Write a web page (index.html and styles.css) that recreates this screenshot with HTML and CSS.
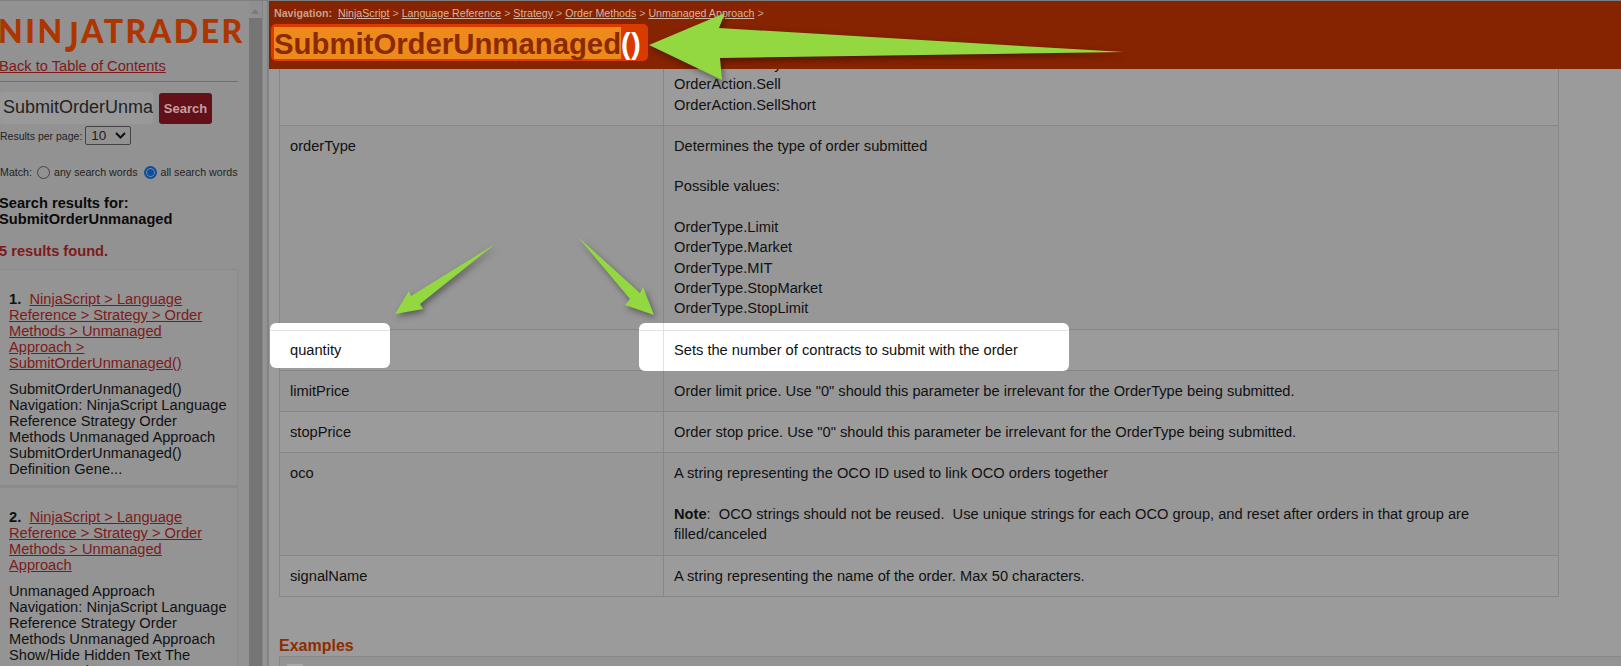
FILE: index.html
```html
<!DOCTYPE html>
<html lang="en">
<head>
    <meta charset="UTF-8">
    <meta name="viewport" content="width=device-width, initial-scale=1.0">
    <title>SubmitOrderUnmanaged()</title>
    <link rel="stylesheet" href="styles.css">
</head>
<body>
    <div class="sidebar">
        <div class="logo">NIN<span class="logo-j">J</span>ATRADER</div>
        <a class="back-link" href="#">Back to Table of Contents</a>
        <hr class="rule">
        <div class="search-row">
            <div class="search-input">SubmitOrderUnmanaged</div>
            <button class="search-btn">Search</button>
        </div>
        <div class="per-page">
            <span>Results per page:</span>
            <span class="select">10<svg width="11" height="7" viewBox="0 0 11 7"><path d="M1 1l4.500 4.500L10 1" fill="none" stroke="#111" stroke-width="2"/></svg></span>
        </div>
        <div class="match">
            <span>Match:</span>
            <span class="radio"></span>
            <span>any search words</span>
            <span class="radio radio-on"></span>
            <span>all search words</span>
        </div>
        <div class="results-title">Search results for:<br>SubmitOrderUnmanaged</div>
        <div class="results-count">5 results found.</div>
        <div class="result">
            <div class="result-link"><b>1.</b>&nbsp; <a href="#">NinjaScript &gt; Language Reference &gt; Strategy &gt; Order Methods &gt; Unmanaged<br>Approach &gt; SubmitOrderUnmanaged()</a></div>
            <div class="result-text">SubmitOrderUnmanaged() Navigation: NinjaScript Language Reference Strategy Order Methods Unmanaged Approach SubmitOrderUnmanaged() Definition Gene...</div>
        </div>
        <div class="result">
            <div class="result-link"><b>2.</b>&nbsp; <a href="#">NinjaScript &gt; Language Reference &gt; Strategy &gt; Order Methods &gt; Unmanaged<br>Approach</a></div>
            <div class="result-text">Unmanaged Approach Navigation: NinjaScript Language Reference Strategy Order Methods Unmanaged Approach Show/Hide Hidden Text The Unmanaged...</div>
        </div>
    </div>

    <div class="scrollbar">
        <div class="scroll-up"></div>
        <div class="scroll-thumb"></div>
    </div>
    <div class="splitter"></div>

    <div class="main">
        <div class="topic-header">
            <div class="crumbs">
                <b>Navigation:</b>&nbsp; <a href="#">NinjaScript</a> &gt; <a href="#">Language Reference</a> &gt; <a href="#">Strategy</a> &gt; <a href="#">Order Methods</a> &gt; <a href="#">Unmanaged Approach</a> &gt;
            </div>
            <h1 class="topic-title"><span class="title-mark"><span class="title-hit">SubmitOrderUnmanaged</span><span class="title-rest">()</span></span></h1>
        </div>
        <div class="content">
            <table class="params">
                <tr>
                    <td class="name"></td>
                    <td>OrderAction.Buy<br>OrderAction.Sell<br>OrderAction.SellShort</td>
                </tr>
                <tr>
                    <td class="name">orderType</td>
                    <td>Determines the type of order submitted<br><br>Possible values:<br><br>OrderType.Limit<br>OrderType.Market<br>OrderType.MIT<br>OrderType.StopMarket<br>OrderType.StopLimit</td>
                </tr>
                <tr>
                    <td class="name"><span class="spot spot-name"><i class="spot-line"></i></span><span class="over">quantity</span></td>
                    <td><span class="spot spot-desc"><i class="spot-line"></i><i class="spot-col"></i></span><span class="over">Sets the number of contracts to submit with the order</span></td>
                </tr>
                <tr>
                    <td class="name">limitPrice</td>
                    <td>Order limit price. Use "0" should this parameter be irrelevant for the OrderType being submitted.</td>
                </tr>
                <tr>
                    <td class="name">stopPrice</td>
                    <td>Order stop price. Use "0" should this parameter be irrelevant for the OrderType being submitted.</td>
                </tr>
                <tr>
                    <td class="name">oco</td>
                    <td>A string representing the OCO ID used to link OCO orders together<br><br><b>Note</b>:&nbsp; OCO strings should not be reused.&nbsp; Use unique strings for each OCO group, and reset after orders in that group are filled/canceled</td>
                </tr>
                <tr>
                    <td class="name">signalName</td>
                    <td>A string representing the name of the order. Max 50 characters.</td>
                </tr>
            </table>
            <h2 class="section-title">Examples</h2>
            <div class="example-box"><span class="example-icon"></span></div>
        </div>
    </div>

    <svg class="arrows" width="1621" height="666" viewBox="0 0 1621 666">
        <polygon points="649,45 725,13 719,28 1124,52 720,58 722,80"/>
        <polygon points="495,244 420,304 423,309 395,314 409,291 411,296"/>
        <polygon points="578,237 640,293 643,287 654,315 625,305 630,299"/>
    </svg>
</body>
</html>
```

FILE: styles.css
```css
* {
    box-sizing: border-box;
}

html, body {
    height: 100%;
}

body {
    display: flex;
    margin: 0;
    overflow: hidden;
    background: #9b9b9b;
    border-top: 1px solid #7f7f7f;
    font-family: "Liberation Sans", Arial, sans-serif;
    color: #111;
}

.sidebar {
    width: 249px;
    flex-shrink: 0;
    padding-right: 11px;
    overflow: hidden;
    background: #929292;
}

.logo {
    margin: 11px 0 0 -2px;
    height: 42px;
    font-family: Lato, sans-serif;
    font-size: 32px;
    font-weight: 900;
    line-height: 37px;
    letter-spacing: 2.500px;
    white-space: nowrap;
    color: #ad3600;
}

.logo-j {
    display: inline-block;
    transform: scaleY(1.3);
    transform-origin: top;
}

.back-link {
    display: block;
    margin: 3px 0 0 -1px;
    font-size: 14.670px;
    line-height: 18px;
    color: #7d1a1a;
}

.rule {
    margin: 6px 0 0;
    border: 0;
    border-top: 1px solid #6f6f6f;
}

.search-row {
    display: flex;
    align-items: flex-start;
    gap: 6px;
    margin-top: 10px;
}

.search-input {
    width: 153px;
    height: 32px;
    padding-left: 3px;
    overflow: hidden;
    background: #999;
    border-radius: 4px;
    font-size: 18px;
    line-height: 31px;
    white-space: nowrap;
    color: #222;
}

.search-btn {
    width: 53px;
    height: 31px;
    margin-top: 1px;
    padding: 0;
    background: #641018;
    border: 0;
    border-radius: 3px;
    font-family: inherit;
    font-size: 13px;
    font-weight: 700;
    color: #c2a0a0;
}

.per-page {
    display: flex;
    align-items: center;
    gap: 3px;
    margin-top: 2px;
    font-size: 10.500px;
    color: #222;
}

.select {
    display: flex;
    align-items: center;
    justify-content: space-between;
    width: 46px;
    height: 19px;
    padding: 0 4px 0 5px;
    border: 1px solid #444;
    border-radius: 2px;
    font-size: 13.500px;
}

.match {
    display: flex;
    align-items: center;
    gap: 3px;
    height: 16px;
    margin-top: 19px;
    font-size: 10.670px;
    white-space: nowrap;
    color: #222;
}

.radio {
    width: 13px;
    height: 13px;
    margin: 0 1px 0 2px;
    border: 1px solid #444;
    border-radius: 50%;
}

.radio-on {
    margin-left: 3px;
    border: 2px solid #0b4da0;
    background: #0b4da0;
    box-shadow: inset 0 0 0 1px #8f8f8f;
}

.results-title {
    margin-top: 15px;
    margin-left: -1px;
    font-size: 14.670px;
    font-weight: 700;
    line-height: 16px;
    color: #0a0a0a;
}

.results-count {
    margin: 16px 0 0 -1px;
    font-size: 14.670px;
    font-weight: 700;
    line-height: 16px;
    color: #7d1a1a;
}

.result {
    padding: 21px 9px 0;
    height: 218px;
    border: 1px solid #8b8b8b;
    border-bottom-width: 2px;
    border-left: 0;
    background: #949494;
    font-size: 14.670px;
    line-height: 16px;
}

.results-count + .result {
    margin-top: 10px;
}

.result-link a {
    color: #7d1a1a;
}

.result-text {
    margin-top: 10px;
    color: #111;
}

.scrollbar {
    width: 13px;
    flex-shrink: 0;
    background: #8f8f8f;
}

.scroll-up {
    height: 17px;
    padding: 8px 0 0 2px;
}

.scroll-up::before {
    content: "";
    display: block;
    width: 0;
    border: 4px solid transparent;
    border-top: 0;
    border-bottom: 5px solid #7a7a7a;
}

.scroll-thumb {
    height: 648px;
    background: #757575;
}

.splitter {
    width: 7px;
    flex-shrink: 0;
    background: #929292;
    border-left: 1px solid #858585;
    border-right: 2px solid #828282;
    box-shadow: inset 2px 0 0 #939393;
}

.main {
    display: flex;
    flex: 1;
    flex-direction: column;
    min-width: 0;
}

.topic-header {
    position: relative;
    z-index: 2;
    flex-shrink: 0;
    height: 68px;
    padding: 6px 0 0 5px;
    background: #862300;
}

.crumbs {
    height: 15px;
    font-size: 10.670px;
    line-height: 13px;
    color: #c9a08c;
}

.crumbs a {
    color: #d8b5a5;
}

.topic-title {
    margin: 2px 0 0 -3px;
    font-size: 29.330px;
    line-height: 34px;
    font-weight: 700;
}

.title-mark {
    display: inline-block;
    height: 37px;
    padding: 3px 7px 0 3px;
    background: #d93a00;
    border-radius: 5px;
}

.title-hit {
    display: inline-block;
    height: 32px;
    background: #ee8a1c;
    color: #8a2a00;
}

.title-rest {
    color: #fff;
}

.content {
    flex: 1;
    min-height: 0;
    padding-left: 10px;
    overflow: hidden;
}

.params {
    width: 1280px;
    margin-top: -26px;
    border-collapse: collapse;
    font-size: 14.670px;
    line-height: 20.300px;
}

.params td {
    padding: 10px;
    vertical-align: top;
    border: 1px solid #878787;
}

.params td.name {
    width: 384px;
}

.params tr:nth-child(even) td {
    background: #979797;
}

.over {
    position: relative;
}

.spot {
    position: absolute;
    display: block;
    background: #fff;
    border-radius: 6px;
}

.spot-name {
    width: 120px;
    height: 45px;
    margin: -17px 0 0 -20px;
}

.spot-desc {
    width: 430px;
    height: 48px;
    margin: -17px 0 0 -35px;
}

.spot-line {
    display: block;
    height: 1px;
    margin-top: 7px;
    background: #e2e2e2;
}

.spot-col {
    position: absolute;
    top: 0;
    left: 24px;
    width: 1px;
    height: 100%;
    background: #e2e2e2;
}

.section-title {
    margin: 40px 0 0;
    font-size: 16px;
    line-height: 18px;
    color: #8f2b00;
}

.example-box {
    height: 60px;
    margin-top: 1px;
    padding: 7px 0 0 7px;
    border-top: 1px solid #878787;
    border-left: 1px solid #878787;
    background: #949494;
}

.example-icon {
    display: block;
    width: 16px;
    height: 16px;
    background: #a9a9a9;
}

.arrows {
    position: absolute;
    top: 0;
    left: 0;
    z-index: 3;
    fill: #93d840;
    filter: drop-shadow(2px 3px 3px rgba(0,0,0,0.4));
    pointer-events: none;
}
```
